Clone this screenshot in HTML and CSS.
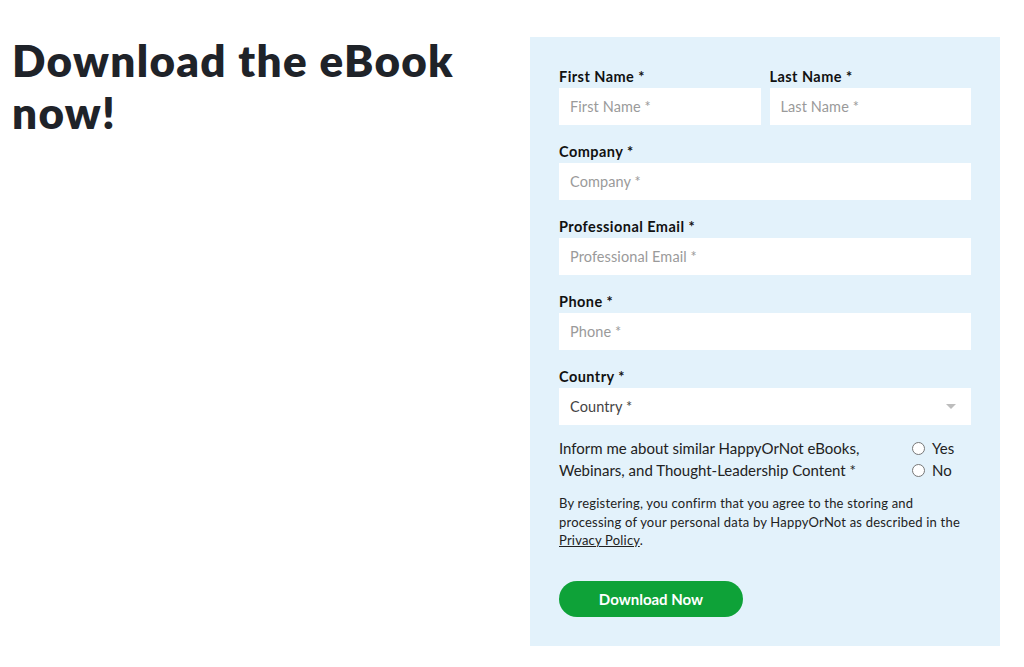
FILE: index.html
```html
<!DOCTYPE html>
<html lang="en">
<head>
<meta charset="utf-8">
<title>Download the eBook</title>
<link rel="stylesheet" href="styles.css">
</head>
<body>
<div class="page">
  <div class="intro">
    <h1 class="title">Download the eBook now!</h1>
  </div>
  <form class="panel">
    <div class="row two">
      <div class="field">
        <label class="label">First Name *</label>
        <div class="input">First Name *</div>
      </div>
      <div class="field">
        <label class="label">Last Name *</label>
        <div class="input">Last Name *</div>
      </div>
    </div>
    <div class="field">
      <label class="label">Company *</label>
      <div class="input">Company *</div>
    </div>
    <div class="field">
      <label class="label">Professional Email *</label>
      <div class="input">Professional Email *</div>
    </div>
    <div class="field">
      <label class="label">Phone *</label>
      <div class="input">Phone *</div>
    </div>
    <div class="field">
      <label class="label">Country *</label>
      <div class="input select"><span>Country *</span><span class="caret"></span></div>
    </div>
    <div class="optin">
      <div class="optin-text">Inform me about similar HappyOrNot eBooks, Webinars, and Thought-Leadership Content *</div>
      <div class="radios">
        <div class="radio"><span class="circle"></span>Yes</div>
        <div class="radio"><span class="circle"></span>No</div>
      </div>
    </div>
    <p class="legal">By registering, you confirm that you agree to the storing and processing of your personal data by HappyOrNot as described in the <a class="link">Privacy Policy</a>.</p>
    <div class="actions"><button type="button" class="btn">Download Now</button></div>
  </form>
</div>
</body>
</html>
```
FILE: styles.css
```css
* { box-sizing: border-box; }
html, body { margin: 0; padding: 0; background: #fff; }
body { font-family: "Lato", "Noto Sans", sans-serif; color: #1d2126; }
.page {
  display: flex;
  padding: 37px 24px 0 12px;
}
.intro { width: 518px; flex: none; }
.title {
  margin: -3px 0 0;
  font-size: 44px;
  line-height: 52px;
  font-weight: 800;
  color: #1f2329;
  width: 480px;
  letter-spacing: 1.3px;
}
.panel {
  width: 470px;
  flex: none;
  background: #e3f2fb;
  padding: 29px;
  display: flex;
  flex-direction: column;
  gap: 16px;
}
.row.two { display: flex; gap: 9px; }
.row.two .field { flex: 1; }
.field { display: flex; flex-direction: column; gap: 1px; }
.label {
  font-size: 14.5px;
  line-height: 21px;
  font-weight: 700;
  color: #111;
  letter-spacing: 0.45px;
}
.input {
  height: 37px;
  background: #fff;
  padding: 0 11px;
  display: flex;
  align-items: center;
  font-size: 14.5px;
  color: #9a9a9a;
  letter-spacing: 0.1px;
}
.select { justify-content: space-between; color: #444; }
.caret {
  width: 0; height: 0;
  border-left: 5px solid transparent;
  border-right: 5px solid transparent;
  border-top: 5px solid #bdbdbd;
  margin-right: 4px;
}
.optin {
  display: flex;
  justify-content: space-between;
  margin-top: -4px;
  font-size: 15px;
  line-height: 22px;
  color: #222;
}
.optin-text { width: 320px; }
.radios { display: flex; flex-direction: column; width: 59px; }
.radio { display: flex; align-items: center; gap: 7px; }
.circle {
  width: 13px; height: 13px;
  border: 1px solid #777;
  border-radius: 50%;
  background: #fff;
}
.legal {
  margin: -3px 0 0;
  width: 402px;
  font-size: 13px;
  line-height: 18.5px;
  color: #222;
  letter-spacing: 0.2px;
}
.link { color: #222; text-decoration: underline; }
.actions { margin-top: 15px; }
.btn {
  width: 184px;
  height: 36px;
  border: 0;
  border-radius: 18px;
  background: #0ea238;
  color: #fff;
  font-family: inherit;
  font-size: 15px;
  font-weight: 700;
}
```
